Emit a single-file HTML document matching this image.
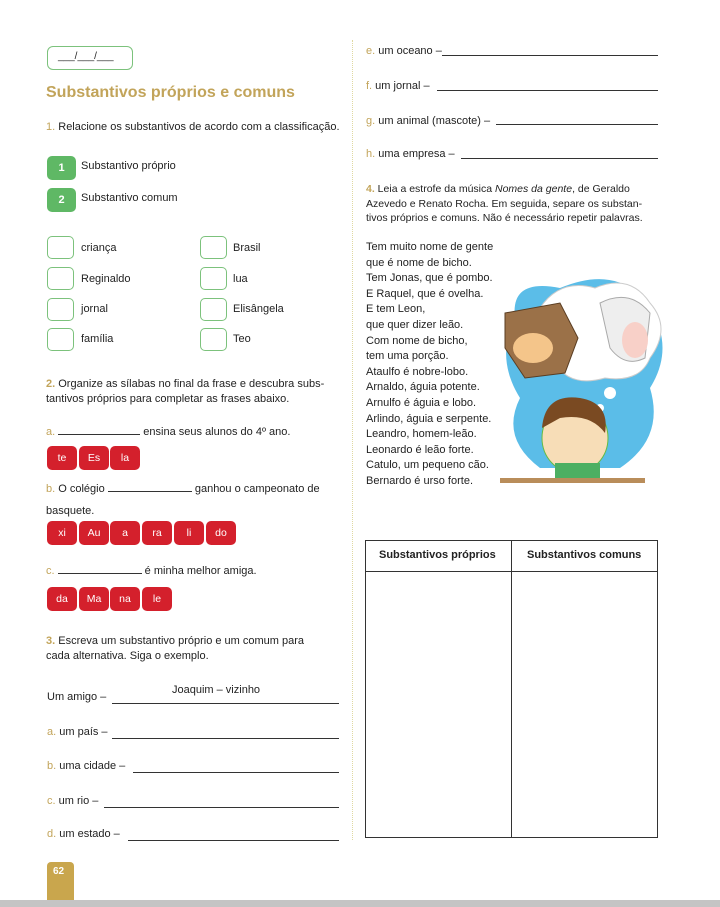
<!DOCTYPE html>
<html><head><meta charset="utf-8"><style>
*{margin:0;padding:0;box-sizing:border-box}
body{width:720px;height:907px;background:#fff;position:relative;font-family:"Liberation Sans",sans-serif;font-size:11px;color:#222;overflow:hidden}
.a{position:absolute;white-space:nowrap}
.g{color:#c2a45a}
.bx{position:absolute;width:27px;height:23px;border:1.3px solid #7cc27c;border-radius:5px;background:#fff}
.num{position:absolute;width:29px;height:24px;background:#5fb865;border-radius:5px;color:#fff;font-weight:bold;text-align:center;line-height:24px;font-size:11px}
.r{position:absolute;height:24px;background:#d4202c;border-radius:5px;color:#fff;text-align:center;line-height:24px;font-size:10.5px;width:30px}
.ln{position:absolute;border-bottom:1.2px solid #333;height:0}
.poem div{height:15.6px;font-size:11px}
</style></head><body>
<div style="position:absolute;left:47px;top:46px;width:86px;height:24px;border:1.3px solid #7cc27c;border-radius:6px"></div>
<div class="a" style="left:58px;top:51px;font-size:10px">___/___/___</div>
<div class="a" style="left:46px;top:84px;font-size:16px;font-weight:bold;color:#c2a45a">Substantivos próprios e comuns</div>
<div class="a" style="left:46px;top:121px;font-size:11px"><span class="g">1.</span> Relacione os substantivos de acordo com a classificação.</div>
<div class="num" style="left:47px;top:156px">1</div><div class="a" style="left:81px;top:160px">Substantivo próprio</div>
<div class="num" style="left:47px;top:188px">2</div><div class="a" style="left:81px;top:192px">Substantivo comum</div>
<div class="bx" style="left:47px;top:236px"></div><div class="a" style="left:81px;top:242px">criança</div>
<div class="bx" style="left:200px;top:236px"></div><div class="a" style="left:233px;top:242px">Brasil</div>
<div class="bx" style="left:47px;top:267px"></div><div class="a" style="left:81px;top:273px">Reginaldo</div>
<div class="bx" style="left:200px;top:267px"></div><div class="a" style="left:233px;top:273px">lua</div>
<div class="bx" style="left:47px;top:298px"></div><div class="a" style="left:81px;top:303px">jornal</div>
<div class="bx" style="left:200px;top:298px"></div><div class="a" style="left:233px;top:303px">Elisângela</div>
<div class="bx" style="left:47px;top:328px"></div><div class="a" style="left:81px;top:333px">família</div>
<div class="bx" style="left:200px;top:328px"></div><div class="a" style="left:233px;top:333px">Teo</div>
<div class="a" style="left:46px;top:377px;font-size:11px;line-height:15px"><span class="g" style="font-weight:bold">2.</span> Organize as sílabas no final da frase e descubra subs-<br>tantivos próprios para completar as frases abaixo.</div>
<div class="a" style="left:46px;top:426px;font-size:11px"><span class="g">a.</span> <span style="display:inline-block;width:82px;border-bottom:1px solid #333"></span> ensina seus alunos do 4º ano.</div>
<div class="r" style="left:47px;top:446px">te</div><div class="r" style="left:79px;top:446px">Es</div><div class="r" style="left:110px;top:446px">la</div>
<div class="a" style="left:46px;top:483px;font-size:11px"><span class="g">b.</span> O colégio <span style="display:inline-block;width:84px;border-bottom:1px solid #333"></span> ganhou o campeonato de</div>
<div class="a" style="left:46px;top:505px;font-size:11px">basquete.</div>
<div class="r" style="left:47px;top:521px">xi</div><div class="r" style="left:79px;top:521px">Au</div><div class="r" style="left:110px;top:521px">a</div><div class="r" style="left:142px;top:521px">ra</div><div class="r" style="left:174px;top:521px">li</div><div class="r" style="left:206px;top:521px">do</div>
<div class="a" style="left:46px;top:565px;font-size:11px"><span class="g">c.</span> <span style="display:inline-block;width:84px;border-bottom:1px solid #333"></span> é minha melhor amiga.</div>
<div class="r" style="left:47px;top:587px">da</div><div class="r" style="left:79px;top:587px">Ma</div><div class="r" style="left:110px;top:587px">na</div><div class="r" style="left:142px;top:587px">le</div>
<div class="a" style="left:46px;top:634px;font-size:11px;line-height:15px"><span class="g" style="font-weight:bold">3.</span> Escreva um substantivo próprio e um comum para<br>cada alternativa. Siga o exemplo.</div>
<div class="a" style="left:47px;top:691px">Um amigo –</div><div class="a" style="left:172px;top:684px">Joaquim – vizinho</div><div class="ln" style="left:112px;width:227px;top:703px"></div>
<div class="a" style="left:47px;top:726px"><span class="g">a.</span> um país –</div><div class="ln" style="left:112px;width:227px;top:738px"></div>
<div class="a" style="left:47px;top:760px"><span class="g">b.</span> uma cidade –</div><div class="ln" style="left:133px;width:206px;top:772px"></div>
<div class="a" style="left:47px;top:795px"><span class="g">c.</span> um rio –</div><div class="ln" style="left:104px;width:235px;top:807px"></div>
<div class="a" style="left:47px;top:828px"><span class="g">d.</span> um estado –</div><div class="ln" style="left:128px;width:211px;top:840px"></div>
<div style="position:absolute;left:47px;top:862px;width:27px;height:38px;background:#c9a64d;border-radius:4px 4px 0 0"></div>
<div class="a" style="left:53px;top:866px;color:#fff;font-weight:bold;font-size:10px">62</div>
<div style="position:absolute;left:0;top:900px;width:720px;height:7px;background:#c4c4c4"></div>
<div style="position:absolute;left:352px;top:40px;height:800px;border-left:1.5px dotted #e0d9a0"></div>
<div class="a" style="left:366px;top:45px"><span class="g">e.</span> um oceano –</div><div class="ln" style="left:442px;width:216px;top:55px"></div>
<div class="a" style="left:366px;top:80px"><span class="g">f.</span> um jornal –</div><div class="ln" style="left:437px;width:221px;top:90px"></div>
<div class="a" style="left:366px;top:115px"><span class="g">g.</span> um animal (mascote) –</div><div class="ln" style="left:496px;width:162px;top:124px"></div>
<div class="a" style="left:366px;top:148px"><span class="g">h.</span> uma empresa –</div><div class="ln" style="left:461px;width:197px;top:158px"></div>
<div class="a" style="left:366px;top:182px;font-size:10.5px;line-height:14.5px"><span class="g" style="font-weight:bold">4.</span> Leia a estrofe da música <i>Nomes da gente</i>, de Geraldo<br>Azevedo e Renato Rocha. Em seguida, separe os substan-<br>tivos próprios e comuns. Não é necessário repetir palavras.</div>
<div class="a poem" style="left:366px;top:241px">
<div>Tem muito nome de gente</div><div>que é nome de bicho.</div><div>Tem Jonas, que é pombo.</div><div>E Raquel, que é ovelha.</div><div>E tem Leon,</div><div>que quer dizer leão.</div><div>Com nome de bicho,</div><div>tem uma porção.</div><div>Ataulfo é nobre-lobo.</div><div>Arnaldo, águia potente.</div><div>Arnulfo é águia e lobo.</div><div>Arlindo, águia e serpente.</div><div>Leandro, homem-leão.</div><div>Leonardo é leão forte.</div><div>Catulo, um pequeno cão.</div><div>Bernardo é urso forte.</div></div>
<svg style="position:absolute;left:500px;top:268px" width="170" height="220" viewBox="0 0 170 220">
<path d="M15 50 Q10 10 60 20 Q120 -5 150 40 Q175 80 150 120 Q165 170 120 200 L40 200 Q0 170 20 130 Q-5 90 15 50Z" fill="#5bbde8"/>
<path d="M40 40 Q60 10 95 20 Q130 5 150 35 Q172 60 150 90 Q140 115 105 110 Q70 120 55 95 Q25 80 40 40Z" fill="#fff" stroke="#ccc"/>
<path d="M5 45 L60 35 L78 70 L65 105 L25 110 L5 80Z" fill="#9b7148" stroke="#5a3d22"/>
<ellipse cx="33" cy="80" rx="20" ry="15" fill="#f4c58a"/>
<path d="M100 35 Q130 20 150 45 L145 90 Q125 100 110 80Z" fill="#eee" stroke="#aaa"/>
<ellipse cx="135" cy="72" rx="13" ry="18" fill="#f8d0c8"/>
<circle cx="110" cy="125" r="6" fill="#fff"/><circle cx="100" cy="140" r="4" fill="#fff"/>
<ellipse cx="75" cy="170" rx="33" ry="35" fill="#f7ddb7" stroke="#6b4"/>
<path d="M42 160 Q45 125 80 130 Q110 135 105 165 Q90 145 60 150Z" fill="#7a4a22"/>
<rect x="55" y="195" width="45" height="18" fill="#4caf62"/>
<rect x="0" y="210" width="145" height="5" fill="#b98d5a"/>
</svg>
<div style="position:absolute;left:365px;top:540px;width:293px;height:298px;border:1.3px solid #333"></div>
<div style="position:absolute;left:365px;top:540px;width:293px;height:32px;border:1.3px solid #333;background:#fff"></div>
<div style="position:absolute;left:511px;top:540px;height:298px;border-left:1.3px solid #333"></div>
<div class="a" style="left:379px;top:549px;font-weight:bold;font-size:11px">Substantivos próprios</div>
<div class="a" style="left:527px;top:549px;font-weight:bold;font-size:11px">Substantivos comuns</div>
</body></html>
